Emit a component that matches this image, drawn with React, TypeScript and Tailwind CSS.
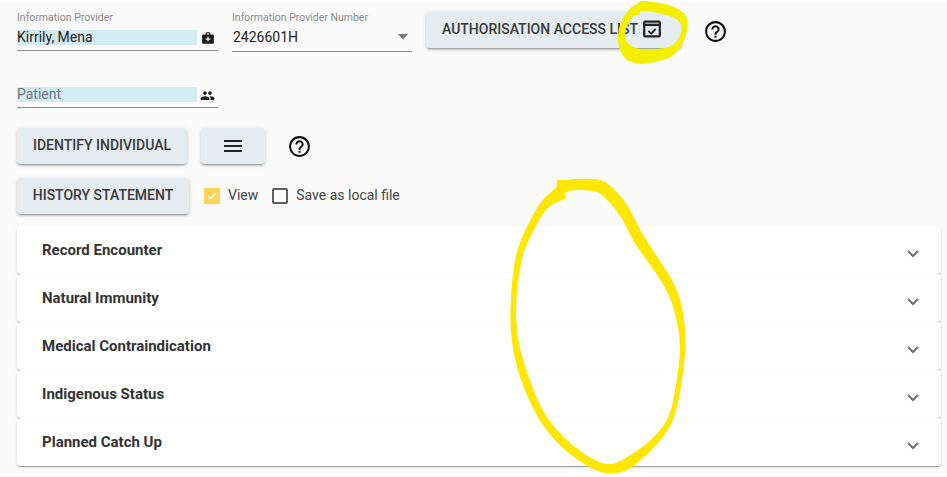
import React from "react";

const Btn = ({ children, className = "" }: { children: React.ReactNode; className?: string }) => (
  <div className={`h-[36px] flex items-center rounded-[4px] bg-[#e4ecef] text-[14px] font-medium text-[#3a3a3a] shadow-[0_3px_1px_-2px_rgba(0,0,0,0.2),0_2px_2px_0_rgba(0,0,0,0.14),0_1px_5px_0_rgba(0,0,0,0.12)] ${className}`}>
    {children}
  </div>
);

const Help = () => (
  <svg width="25" height="25" viewBox="0 0 24 24" fill="#111">
    <path d="M11 18h2v-2h-2v2zm1-16C6.48 2 2 6.48 2 12s4.48 10 10 10 10-4.48 10-10S17.52 2 12 2zm0 18c-4.41 0-8-3.59-8-8s3.59-8 8-8 8 3.59 8 8-3.59 8-8 8zm0-14c-2.21 0-4 1.79-4 4h2c0-1.1.9-2 2-2s2 .9 2 2c0 2-3 1.75-3 5h2c0-2.25 3-2.5 3-5 0-2.21-1.79-4-4-4z" />
  </svg>
);

const rows = ["Record Encounter", "Natural Immunity", "Medical Contraindication", "Indigenous Status", "Planned Catch Up"];

const bigOuter = "171,30 290,24 328,42 383,102 423,187 473,262 528,347 552,430 558,530 548,622 528,733 498,793 443,853 383,903 330,914 278,899 207,853 147,793 107,733 57,622 31,500 31,390 41,288 57,218 107,118 137,78 172,52";
const bigInner = "195,60 280,60 310,75 365,140 400,215 440,270 500,355 530,440 543,530 530,640 510,740 470,795 430,830 360,875 330,884 290,875 220,830 165,775 125,720 80,610 50,500 47,390 60,290 75,230 125,135 150,105 195,88";
const smallOuter = "660,0 745,12 795,38 806,70 795,122 764,169 702,190 638,192 606,168 592,126 595,88 611,47 638,17 660,8";
const smallInner = "660,45 640,45 625,70 612,100 620,130 650,148 700,150 760,140 785,100 785,70 760,50 710,38 660,30";

const smooth = (pts: string) => {
  const p = pts.split(" ").map((s) => s.split(",").map(Number));
  const mid = (a: number[], b: number[]) => `${(a[0] + b[0]) / 2},${(a[1] + b[1]) / 2}`;
  let d = `M${mid(p[p.length - 1], p[0])}`;
  p.forEach((c, i) => {
    d += ` Q${c[0]},${c[1]} ${mid(c, p[(i + 1) % p.length])}`;
  });
  return d + " Z";
};

export default function App() {
  return (
    <div className="relative w-[947px] h-[477px] overflow-hidden bg-white font-['Roboto',sans-serif]">
      <div className="mt-[2px] h-[471px] bg-[#fafafa] pl-[17px] pr-[6px] flex flex-col">
        <div className="flex items-start h-[105px]">
          <div className="w-[201px] pt-[10px]">
            <div className="text-[10.5px] leading-[12px] text-[#8a8a8a]">Information Provider</div>
            <div className="mt-[6px] flex h-[21px] items-start border-b border-[#8c8c8c]">
              <div className="w-[180px] h-[15px] bg-[#d2ebf3] text-[14px] leading-[15px] text-[#222]">Kirrily, Mena</div>
              <svg className="ml-[4px] mt-[1px]" width="14" height="14" viewBox="0 0 24 24" fill="#1a1a1a">
                <path d="M20 6h-4V4c0-1.1-.9-2-2-2h-4c-1.1 0-2 .9-2 2v2H4c-1.1 0-2 .9-2 2v12c0 1.1.9 2 2 2h16c1.1 0 2-.9 2-2V8c0-1.1-.9-2-2-2zM10 4h4v2h-4V4zm6 11h-3v3h-2v-3H8v-2h3v-3h2v3h3v2z" />
              </svg>
            </div>
          </div>
          <div className="ml-[14px] w-[180px] pt-[10px]">
            <div className="text-[10.5px] leading-[12px] text-[#8a8a8a]">Information Provider Number</div>
            <div className="mt-[6px] flex h-[22px] items-start justify-between border-b border-[#8c8c8c] pl-[1px]">
              <span className="text-[14px] leading-[15px] text-[#222]">2426601H</span>
              <svg className="mr-[4px] mt-[2px]" width="10" height="10" viewBox="0 0 10 10" fill="#777"><path d="M0 2h10L5 7.5z" /></svg>
            </div>
          </div>
          <Btn className="ml-[14px] mt-[10px] w-[256px] pl-[16px] pb-[1px]">
            <span>AUTHORISATION ACCESS LIST</span>
            <svg className="ml-[3px] mb-[1px]" width="22" height="22" viewBox="0 0 24 24" fill="none" stroke="#222">
              <rect x="3.5" y="4" width="17" height="16" rx="1" strokeWidth="2.4" />
              <path d="M4 7.5h16" strokeWidth="2.6" />
              <path d="M8 14l3 3 5-5" strokeWidth="2" />
            </svg>
          </Btn>
          <div className="ml-[21px] mt-[17px]"><Help /></div>
        </div>
        <div className="w-[201px] h-[21px] flex items-start border-b border-[#8c8c8c] mt-[-20px]">
          <div className="w-[180px] h-[15px] bg-[#d2ebf3] text-[14px] leading-[15px] text-[#6f777b]">Patient</div>
          <svg className="ml-[3px] mt-[1px]" width="15" height="15" viewBox="0 0 24 24" fill="#1a1a1a">
            <path d="M16 11c1.66 0 2.99-1.34 2.99-3S17.66 5 16 5s-3 1.34-3 3 1.34 3 3 3zm-8 0c1.66 0 2.99-1.34 2.99-3S9.66 5 8 5 5 6.34 5 8s1.34 3 3 3zm0 2c-2.33 0-7 1.17-7 3.5V19h14v-2.5C15 14.17 10.33 13 8 13zm8 0c-.29 0-.62.02-.97.05 1.16.84 1.97 1.97 1.97 3.45V19h6v-2.5c0-2.33-4.67-3.5-7-3.5z" />
          </svg>
        </div>
        <div className="mt-[20px] flex items-center">
          <Btn className="w-[170px] justify-center pb-[1px]">IDENTIFY INDIVIDUAL</Btn>
          <Btn className="ml-[14px] w-[64px] justify-center">
            <svg width="24" height="24" viewBox="0 0 24 24" fill="#222"><path d="M3 18h18v-2H3v2zm0-5h18v-2H3v2zm0-7v2h18V6H3z" /></svg>
          </Btn>
          <div className="ml-[22px]"><Help /></div>
        </div>
        <div className="mt-[14px] flex items-center">
          <Btn className="w-[172px] justify-center pb-[1px]">HISTORY STATEMENT</Btn>
          <div className="ml-[15px] w-[16px] h-[16px] bg-[#ffd558] flex items-center justify-center">
            <svg width="12" height="12" viewBox="0 0 24 24" fill="none" stroke="#fff" strokeWidth="2.5"><path d="M4 12l5 5L20 6" /></svg>
          </div>
          <span className="ml-[8px] pb-[2px] text-[14px] text-[#444]">View</span>
          <div className="ml-[14px] w-[16px] h-[16px] border-2 border-[#5f5f5f] rounded-[2px]" />
          <span className="ml-[8px] pb-[2px] text-[14px] text-[#444]">Save as local file</span>
        </div>
        <div className="mt-[12px] flex flex-col">
          {rows.map((r) => (
            <div key={r} className="h-[48px] flex items-center justify-between rounded-[4px] bg-white pl-[25px] pr-[20px] shadow-[0_2px_1px_-1px_rgba(0,0,0,0.2),0_1px_1px_0_rgba(0,0,0,0.14),0_1px_3px_0_rgba(0,0,0,0.12)]">
              <span className="pt-[1px] text-[15px] font-bold text-[#333]">{r}</span>
              <svg className="mt-[6px]" width="16" height="16" viewBox="0 0 16 16" fill="none" stroke="#6f6f6f" strokeWidth="2"><path d="M3 6l5 5 5-5" /></svg>
            </div>
          ))}
        </div>
      </div>
      <svg className="absolute left-0 top-0 pointer-events-none" width="947" height="477" viewBox="0 0 947 477" fillRule="evenodd">
        <path transform="translate(500 170) scale(0.3333)" fill="#fde600" d={`${smooth(bigOuter)} ${smooth(bigInner)}`} />
        <path fill="#fde600" d="M557 180h10v8h-2v11h-8z" />
        <path transform="translate(420 0) scale(0.3333)" fill="#f4ee00" d={`${smooth(smallOuter)} ${smooth(smallInner)}`} />
      </svg>
    </div>
  );
}
